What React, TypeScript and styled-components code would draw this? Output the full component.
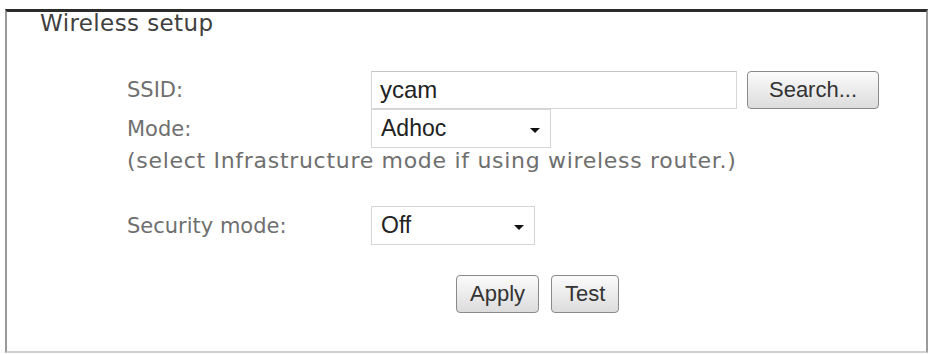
import React from "react";
import styled, { createGlobalStyle } from "styled-components";

const GlobalStyle = createGlobalStyle`
  html, body {
    margin: 0;
    padding: 0;
    background: #ffffff;
  }
`;

const Panel = styled.div`
  box-sizing: border-box;
  margin: 9px 0 0 5px;
  width: 923px;
  height: 344px;
  border-top: 3px solid #2b2b2b;
  border-left: 2px solid #9a9a9a;
  border-right: 2px solid #9a9a9a;
  border-bottom: 2px solid #cfcfcf;
  font-family: "DejaVu Sans", Verdana, sans-serif;
`;

const Title = styled.div`
  padding: 0 0 0 33px;
  height: 41px;
  font-size: 23px;
  line-height: 22px;
  letter-spacing: 0.4px;
  color: #3f3f3f;
`;

const Form = styled.div`
  display: grid;
  grid-template-columns: 244px auto;
  padding: 18px 0 0 120px;
  align-items: center;
`;

const Label = styled.div`
  font-size: 21px;
  color: #6f6f6f;
  height: 38px;
  display: flex;
  align-items: center;
`;

const Control = styled.div`
  display: flex;
  align-items: center;
  gap: 10px;
`;

const Note = styled.div`
  grid-column: 1 / span 2;
  font-size: 22px;
  letter-spacing: 0.7px;
  color: #6f6f6f;
  padding: 0;
  height: 58px;
`;

const TextBox = styled.div`
  box-sizing: border-box;
  width: 366px;
  height: 38px;
  border: 1px solid #d6d6d6;
  border-top-color: #c4c4c4;
  padding: 0 8px;
  display: flex;
  align-items: center;
  font-family: "Liberation Sans", Arial, sans-serif;
  font-size: 24px;
  color: #222;
`;

const SelectBox = styled.div<{ w: number }>`
  box-sizing: border-box;
  width: ${(p) => p.w}px;
  height: 39px;
  border: 1px solid #d6d6d6;
  padding: 0 10px 0 9px;
  display: flex;
  align-items: center;
  justify-content: space-between;
  font-family: "Liberation Sans", Arial, sans-serif;
  font-size: 23px;
  color: #222;
`;

const Arrow = styled.span`
  width: 0;
  height: 0;
  border-left: 5px solid transparent;
  border-right: 5px solid transparent;
  border-top: 5px solid #111;
  margin-top: 3px;
`;

const Button = styled.button<{ w?: number }>`
  box-sizing: border-box;
  height: 38px;
  width: ${(p) => (p.w ? `${p.w}px` : "auto")};
  padding: 0 13px;
  border: 1px solid #8a8a8a;
  border-radius: 4px;
  background: linear-gradient(#fbfbfb, #dcdcdc);
  font-family: "Liberation Sans", Arial, sans-serif;
  font-size: 22px;
  color: #333;
`;

const ButtonRow = styled.div`
  grid-column: 1 / span 2;
  display: flex;
  gap: 12px;
  padding: 30px 0 0 329px;
`;

export default function App() {
  return (
    <>
      <GlobalStyle />
      <Panel>
        <Title>Wireless setup</Title>
        <Form>
          <Label>SSID:</Label>
          <Control>
            <TextBox>ycam</TextBox>
            <Button w={132}>Search...</Button>
          </Control>
          <Label>Mode:</Label>
          <Control>
            <SelectBox w={180}>
              Adhoc
              <Arrow />
            </SelectBox>
          </Control>
          <Note>(select Infrastructure mode if using wireless router.)</Note>
          <Label>Security mode:</Label>
          <Control>
            <SelectBox w={164}>
              Off
              <Arrow />
            </SelectBox>
          </Control>
          <ButtonRow>
            <Button>Apply</Button>
            <Button>Test</Button>
          </ButtonRow>
        </Form>
      </Panel>
    </>
  );
}
